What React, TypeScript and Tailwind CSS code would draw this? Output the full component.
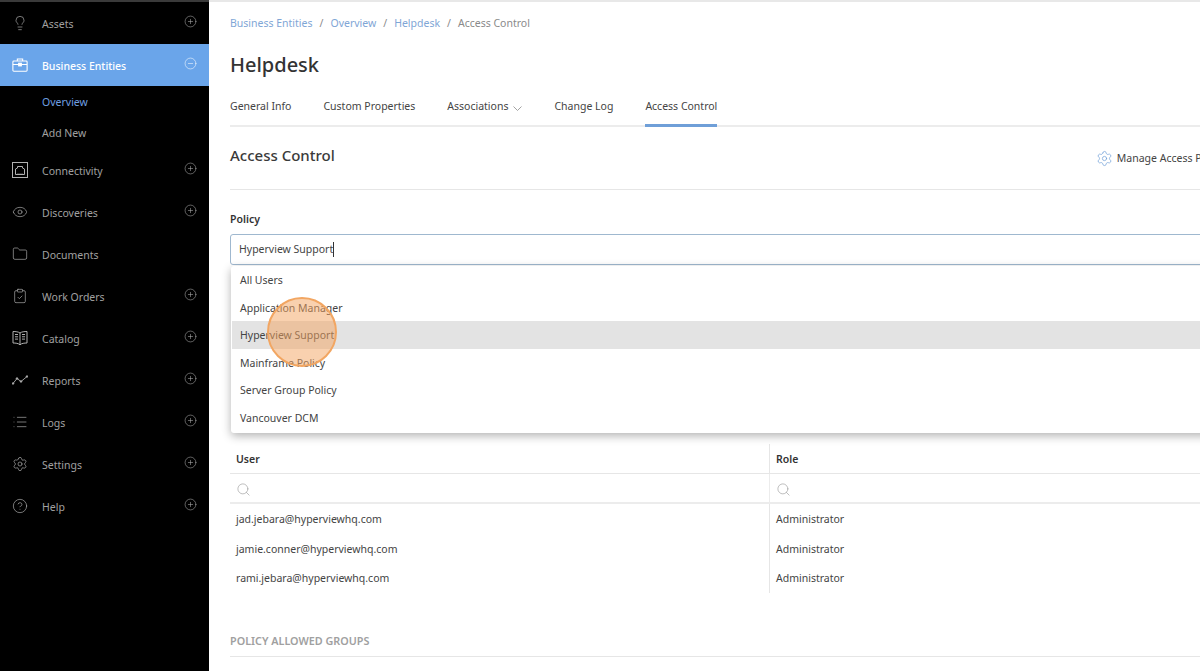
import React from "react";
import { Lightbulb, Eye, Folder, ClipboardCheck, List, Settings, CircleHelp, CirclePlus, CircleMinus, Search } from "lucide-react";

const font = "font-['Noto_Sans','Open_Sans',sans-serif]";

function Briefcase() {
  return (
    <svg width="18" height="16" viewBox="0 0 18 16" fill="none" stroke="white" strokeWidth="1.2">
      <rect x="1" y="3.5" width="16" height="11.5" rx="1" />
      <path d="M6 3.5V1.2h6v2.3M1 7.5h16" />
      <rect x="7.5" y="6" width="3" height="3" fill="white" />
    </svg>
  );
}
function Connect() {
  return (
    <svg width="16" height="16" viewBox="0 0 16 16" fill="none" stroke="#b0b0b0" strokeWidth="1">
      <rect x="0.5" y="0.5" width="15" height="15" />
      <path d="M3.5 12.5V7l2-1V4.5h5V6l2 1v5.5z" />
      <path d="M6 12.5v-1M8 12.5v-1M10 12.5v-1" />
    </svg>
  );
}
function Book() {
  return (
    <svg width="16" height="16" viewBox="0 0 16 16" fill="none" stroke="#b0b0b0" strokeWidth="1">
      <path d="M8 3C6.5 1.8 3.5 1.5 1 1.5v11.5c2.5 0 5.500.3 7 1.800 1.500-1.500 4.500-1.800 7-1.800V1.500C12.500 1.500 9.500 1.800 8 3zM8 3v11.800" />
      <path d="M3 4.500h3M3 6.800h3M3 9.100h3M10 4.500h3M10 6.800h3M10 9.100h3" />
    </svg>
  );
}
function Trend() {
  return (
    <svg width="16" height="10" viewBox="0 0 16 10" fill="#b0b0b0" stroke="#b0b0b0" strokeWidth="0.9">
      <path d="M1 8.500 5 3.500l4 3 6-5" fill="none" />
      <circle cx="1" cy="8.500" r="0.800" />
      <circle cx="5" cy="3.500" r="0.800" />
      <circle cx="9" cy="6.500" r="0.800" />
      <circle cx="15" cy="1.500" r="0.800" />
    </svg>
  );
}
function Chevron() {
  return (
    <svg width="9" height="5" viewBox="0 0 9 5" fill="none" stroke="#999" strokeWidth="0.9" className="mt-[2px]">
      <path d="M0.500 0.500 4.500 4.500 8.500 0.500" />
    </svg>
  );
}

const ic = { size: 18, strokeWidth: 1, color: "#b0b0b0" };

function NavItem({ icon, label, plus = true, active = false }: { icon: React.ReactNode; label: string; plus?: boolean; active?: boolean }) {
  return (
    <div className={`h-[42px] flex items-center pl-[12px] pr-[12px] ${active ? "bg-[#6aa5ea] text-white font-medium" : "text-[#a0a0a0]"}`}>
      <span className="w-[16px] flex justify-center shrink-0">{icon}</span>
      <span className="ml-[14px] text-[10.5px] flex-1 pt-[3px]">{label}</span>
      {plus && (
        <span className="-mt-[3px]">
          {active ? <CircleMinus size={13} strokeWidth={1} color="white" /> : <CirclePlus size={13} strokeWidth={1} color="#b0b0b0" />}
        </span>
      )}
    </div>
  );
}

function Tab({ children, active = false }: { children: React.ReactNode; active?: boolean }) {
  return (
    <div className={`h-[41px] flex items-center pt-[4px] border-b-[3px] -mb-[1px] ${active ? "border-[#6f9fd8]" : "border-transparent"}`}>
      {children}
    </div>
  );
}

function Sep() {
  return <span className="text-[#8a8a8a]">/</span>;
}

const options = ["All Users", "Application Manager", "Hyperview Support", "Mainframe Policy", "Server Group Policy", "Vancouver DCM"];
const rows = ["jad.jebara@hyperviewhq.com", "jamie.conner@hyperviewhq.com", "rami.jebara@hyperviewhq.com"];

export default function App() {
  return (
    <div className={`h-[671px] w-[1200px] overflow-hidden flex bg-white ${font}`}>
      <aside className="w-[209px] shrink-0 bg-black border-t-2 border-[#3a3a3a] h-full">
        <NavItem icon={<Lightbulb {...ic} />} label="Assets" />
        <NavItem icon={<Briefcase />} label="Business Entities" active />
        <div className="h-[31.5px] flex items-center pl-[42px] pt-[3px] text-[10.5px] text-[#6f9fe0]">Overview</div>
        <div className="h-[31.5px] flex items-center pl-[42px] pt-[2px] text-[10.5px] text-[#a0a0a0]">Add New</div>
        <NavItem icon={<Connect />} label="Connectivity" />
        <NavItem icon={<Eye {...ic} />} label="Discoveries" />
        <NavItem icon={<Folder {...ic} />} label="Documents" plus={false} />
        <NavItem icon={<ClipboardCheck {...ic} />} label="Work Orders" />
        <NavItem icon={<Book />} label="Catalog" />
        <NavItem icon={<Trend />} label="Reports" />
        <NavItem icon={<List {...ic} />} label="Logs" />
        <NavItem icon={<Settings {...ic} />} label="Settings" />
        <NavItem icon={<CircleHelp {...ic} />} label="Help" />
      </aside>

      <main className="relative flex-1 min-w-0 overflow-hidden text-[10.5px] text-[#444] border-t-2 border-[#e8e8e8]">
        <div className="w-[1002px] ml-[21px]">
          <div className="h-[42px] flex items-center gap-[7px] pt-[2px] text-[#7fa6d6]">
            <span>Business Entities</span><Sep /><span>Overview</span><Sep /><span>Helpdesk</span><Sep />
            <span className="text-[#8a8a8a]">Access Control</span>
          </div>
          <h1 className="h-[42px] flex items-center text-[20px] font-medium text-[#333]">Helpdesk</h1>
          <div className="h-[41px] flex gap-[32px] border-b-2 border-[#ececec]">
            <Tab>General Info</Tab>
            <Tab>Custom Properties</Tab>
            <Tab><span className="flex items-center gap-[5px]">Associations <Chevron /></span></Tab>
            <Tab>Change Log</Tab>
            <Tab active>Access Control</Tab>
          </div>
          <div className="h-[63px] flex justify-between items-start border-b border-[#e6e6e6]">
            <h2 className="text-[15px] font-medium text-[#3a3a3a] mt-[17px]">Access Control</h2>
            <div className="flex items-center gap-[4px] mt-[23px]">
              <Settings size={17} strokeWidth={1} color="#6f9fd8" />
              <span>Manage Access Policies</span>
            </div>
          </div>
          <div className="mt-[21px] font-semibold text-[#333] leading-[17px]">Policy</div>
          <div className="relative mt-[6px]">
            <div className="h-[31px] border border-[#9fb8cf] rounded-[3px] flex items-center pl-[8px]">
              <span>Hyperview Support</span><span className="w-px h-[15px] bg-[#333]" />
            </div>
            <div className="absolute left-[1px] right-0 top-[32px] h-[167px] bg-white rounded-[3px] shadow-[0_3px_10px_rgba(0,0,0,0.3)] pl-[1px] z-10">
              {options.map((o, i) => (
                <div key={o} className={`h-[27.6px] flex items-center pl-[8px] pt-[2px] ${i === 2 ? "bg-[#e3e3e3]" : ""}`}>{o}</div>
              ))}
            </div>
          </div>
          <div className="mt-[179px] grid grid-cols-[539px_1fr]">
            <div className="h-[30px] flex items-center pl-[6px] pt-[2px] font-semibold text-[#333] border-b border-[#e6e6e6]">User</div>
            <div className="h-[30px] flex items-center pl-[6px] pt-[2px] font-semibold text-[#333] border-b border-l border-[#e6e6e6]">Role</div>
            <div className="h-[30px] flex items-center pl-[6px] pt-[2px] border-b-2 border-[#ececec]"><Search size={15} strokeWidth={1} color="#999" /></div>
            <div className="h-[30px] flex items-center pl-[6px] pt-[2px] border-b-2 border-l border-[#ececec]"><Search size={15} strokeWidth={1} color="#999" /></div>
            {rows.map((r) => (
              <React.Fragment key={r}>
                <div className="h-[29.6px] flex items-center pl-[6px] pt-[2px]">{r}</div>
                <div className="h-[29.6px] flex items-center pl-[6px] pt-[2px] border-l border-[#e6e6e6]">Administrator</div>
              </React.Fragment>
            ))}
          </div>
          <div className="mt-[39px] h-[25px] flex items-start pt-[1px] text-[10.8px] font-semibold text-[#a0a0a0] border-b border-[#e6e6e6]">POLICY ALLOWED GROUPS</div>
        </div>
        <div className="absolute left-[58px] top-[295px] w-[70px] h-[70px] rounded-full bg-[#f4a460]/50 border-2 border-[#f2a662] z-20" />
      </main>
    </div>
  );
}
